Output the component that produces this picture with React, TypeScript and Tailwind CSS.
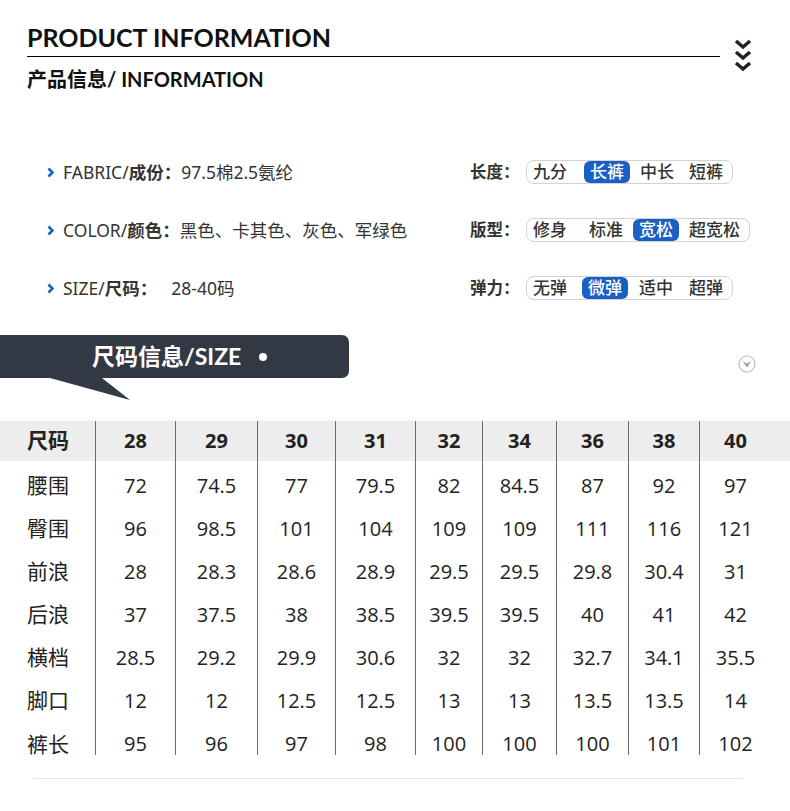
const SPEC_FONT = "font-['Noto_Sans','Noto_Sans_CJK_SC',sans-serif]";
const TABLE_FONT = "font-['Open_Sans','Noto_Sans_CJK_SC',sans-serif]";

const TAGS = [
  { label: "长度：", items: ["九分", "长裤", "中长", "短裤"], active: 1, gaps: ["", "ml-[11px]", "ml-[4px]", "ml-[3px]"] },
  { label: "版型：", items: ["修身", "标准", "宽松", "超宽松"], active: 2, gaps: ["", "ml-[10px]", "ml-[4px]", "ml-[4px]"] },
  { label: "弹力：", items: ["无弹", "微弹", "适中", "超弹"], active: 1, gaps: ["", "ml-[9px]", "ml-[5px]", "ml-[4px]"] },
];

const SIZES = ["28", "29", "30", "31", "32", "34", "36", "38", "40"];

const ROWS = [
  ["腰围", "72", "74.5", "77", "79.5", "82", "84.5", "87", "92", "97"],
  ["臀围", "96", "98.5", "101", "104", "109", "109", "111", "116", "121"],
  ["前浪", "28", "28.3", "28.6", "28.9", "29.5", "29.5", "29.8", "30.4", "31"],
  ["后浪", "37", "37.5", "38", "38.5", "39.5", "39.5", "40", "41", "42"],
  ["横档", "28.5", "29.2", "29.9", "30.6", "32", "32", "32.7", "34.1", "35.5"],
  ["脚口", "12", "12", "12.5", "12.5", "13", "13", "13.5", "13.5", "14"],
  ["裤长", "95", "96", "97", "98", "100", "100", "100", "101", "102"],
];

const gridCols = "grid grid-cols-[95px_80px_82px_78px_80px_67px_74px_72px_71px_72px]";

function BlueArrow() {
  return (
    <svg width="7" height="11" viewBox="0 0 7 11" className="shrink-0">
      <polyline points="1.5,1.5 5.5,5.5 1.5,9.5" fill="none" stroke="#1565c0" strokeWidth="2.6" />
    </svg>
  );
}

function SpecRow({ label, bold, value, extra }: { label: string; bold: string; value: string; extra?: string }) {
  return (
    <div className="flex h-[58px] items-center">
      <BlueArrow />
      <div className={`ml-[9px] text-[17.5px] leading-[22px] text-[#333] ${SPEC_FONT}`}>
        {label}
        <span className="font-bold">{bold}</span>
        <span className={extra}>{value}</span>
      </div>
    </div>
  );
}

export default function App() {
  return (
    <div className="relative h-[811px] w-[790px] overflow-hidden bg-white">
      {/* Title */}
      <div className="flex pl-[27px] pt-[22px]">
        <div className="w-[693px]">
          <div className="font-['Lato','Noto_Sans_CJK_SC',sans-serif] text-[25px] font-bold leading-[30px] text-[#111]">
            PRODUCT INFORMATION
          </div>
          <div className="mt-[4px] h-px bg-black" />
          <div className="mt-[10px] font-['Lato','Noto_Sans_CJK_SC',sans-serif] text-[20px] font-bold leading-[24px] text-[#111]">
            产品信息/ INFORMATION
          </div>
        </div>
        <svg width="18" height="36" viewBox="0 0 18 36" className="ml-[14px] mt-[17px]">
          <polyline points="2,2 9,8 16,2" fill="none" stroke="#222" strokeWidth="3.6" />
          <polyline points="2,13 9,19 16,13" fill="none" stroke="#222" strokeWidth="3.6" />
          <polyline points="2,24 9,30 16,24" fill="none" stroke="#222" strokeWidth="3.6" />
        </svg>
      </div>

      {/* Specs */}
      <div className="mt-[52px] flex">
        <div className="w-[470px] pl-[47px]">
          <SpecRow label="FABRIC/" bold="成份：" value="97.5棉2.5氨纶" />
          <SpecRow label="COLOR/" bold="颜色：" value="黑色、卡其色、灰色、军绿色" />
          <SpecRow label="SIZE/" bold="尺码：" value="28-40码" extra="ml-[14px]" />
        </div>
        <div className={SPEC_FONT}>
          {TAGS.map((t) => (
            <div key={t.label} className="flex h-[58px] items-center">
              <span className="w-[56px] text-[16.5px] font-bold text-[#333]">{t.label}</span>
              <div className="flex h-[24px] items-center rounded-[8px] border border-[#d2d2d2] pr-[3px]">
                {t.items.map((it, i) => (
                  <span
                    key={it}
                    className={`${t.gaps[i]} h-[22px] rounded-[6px] px-[6px] text-[17px] font-medium leading-[22px] ${
                      i === t.active ? "bg-[#1a5fc4] text-white" : "text-[#333]"
                    }`}
                  >
                    {it}
                  </span>
                ))}
              </div>
            </div>
          ))}
        </div>
      </div>

      {/* Size banner */}
      <div className="mt-[18px] flex items-start justify-between">
        <div className="relative flex h-[43px] w-[349px] items-center rounded-r-[7px] bg-[#333944] pl-[92px]">
          <span className="font-['Lato','Noto_Sans_CJK_SC',sans-serif] text-[23px] font-bold text-white">
            尺码信息/SIZE
          </span>
          <span className="ml-[18px] h-[8px] w-[8px] rounded-full bg-white" />
          <svg width="140" height="23" viewBox="0 0 140 23" className="absolute left-0 top-full">
            <polygon points="50,0 102,0 130,22" fill="#333944" />
          </svg>
        </div>
        <svg width="20" height="20" viewBox="0 0 20 20" className="mr-[33px] mt-[19px]">
          <circle cx="10" cy="10" r="8" fill="none" stroke="#bdbdbd" strokeWidth="1.2" />
          <polygon points="5.5,7 10,13.5 14.5,7 10,9.5" fill="#9e9e9e" />
        </svg>
      </div>

      {/* Table */}
      <div className={`mt-[43px] text-[#222] ${TABLE_FONT}`}>
        <div className={`${gridCols} h-[40px] w-full items-stretch bg-[#ededed]`}>
          <div className="flex items-center pl-[27px] text-[21px] font-bold">尺码</div>
          {SIZES.map((s) => (
            <div key={s} className="flex items-center justify-center border-l border-[#6a6a6a] text-[20px] font-bold">
              {s}
            </div>
          ))}
        </div>
        {ROWS.map((r, ri) => {
          const first = ri === 0;
          const last = ri === ROWS.length - 1;
          const rowH = first ? "h-[46px]" : last ? "h-[33px]" : "h-[43px]";
          const cellAlign = first
            ? "items-center pt-[3px]"
            : last
              ? "items-start pt-[11px] leading-[22px]"
              : "items-center";
          return (
            <div key={r[0]} className={`${gridCols} ${rowH}`}>
              <div className={`flex pl-[27px] text-[21px] ${cellAlign}`}>{r[0]}</div>
              {r.slice(1).map((v, i) => (
                <div key={i} className={`flex justify-center border-l border-[#6a6a6a] text-[20px] ${cellAlign}`}>
                  {v}
                </div>
              ))}
            </div>
          );
        })}
      </div>

      <div className="ml-[33px] mt-[23px] h-px w-[710px] bg-[#e4e4e4]" />
    </div>
  );
}
